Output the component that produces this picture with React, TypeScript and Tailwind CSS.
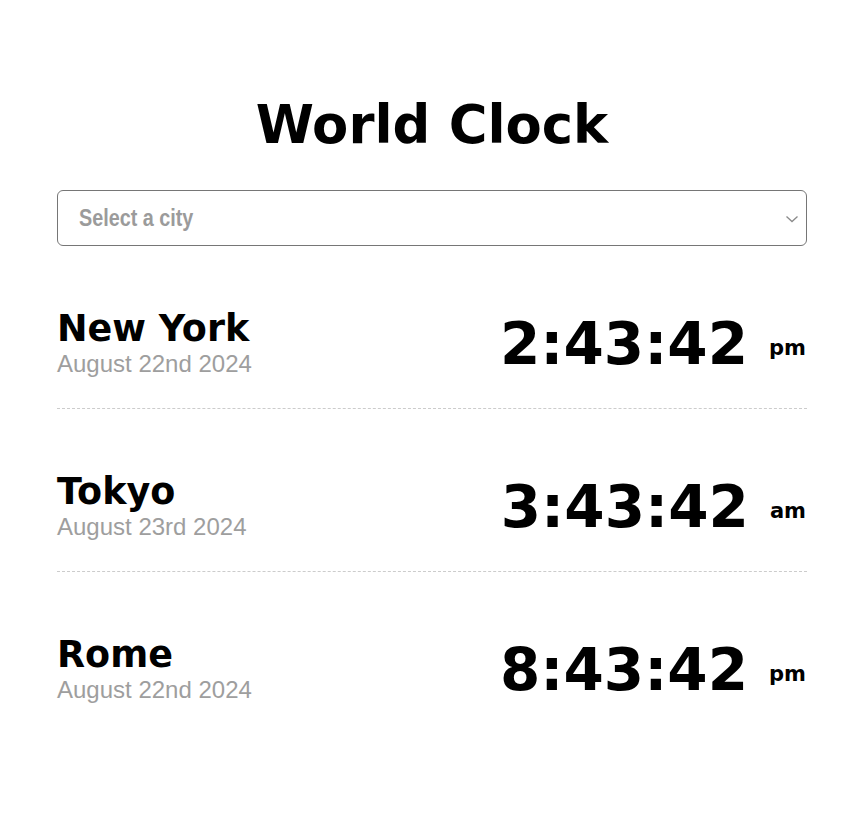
import { useState } from "react"

type City = {
  name: string
  date: string
  time: string
  period: string
}

const cities: City[] = [
  { name: "New York", date: "August 22nd 2024", time: "2:43:42", period: "pm" },
  { name: "Tokyo", date: "August 23rd 2024", time: "3:43:42", period: "am" },
  { name: "Rome", date: "August 22nd 2024", time: "8:43:42", period: "pm" },
]

const ClockRow = ({ city }: { city: City }) => {
  return (
    <div className="flex items-end justify-between border-b border-dashed border-[#cccccc] pt-[61px] pb-[30px] last:border-b-0">
      <div className="flex flex-col">
        <span className="font-['DejaVu_Sans',sans-serif] text-[36.5px] font-bold leading-[normal] text-black">
          {city.name}
        </span>
        <span className="font-['Liberation_Sans',Arial,sans-serif] text-[24px] leading-[normal] text-[#9e9e9e]">
          {city.date}
        </span>
      </div>
      <div className="flex items-end font-['DejaVu_Sans',sans-serif] font-bold text-black">
        <span className="text-[58px] leading-[normal]">{city.time}</span>
        <span className="mb-[18px] ml-[21px] mr-[1px] text-[21px] leading-[normal]">{city.period}</span>
      </div>
    </div>
  )
}

export default function App() {
  const [open, setOpen] = useState(false)

  return (
    <div className="min-h-screen bg-white">
      <div className="ml-[57px] w-[750px] pt-[94px]">
        <h1 className="text-center font-['DejaVu_Sans',sans-serif] text-[52.8px] font-bold leading-[normal] text-black">
          World Clock
        </h1>
        <div
          onClick={() => setOpen(!open)}
          className="mt-[35px] flex h-[56px] w-full cursor-pointer items-center justify-between rounded-[6px] border border-[#767676] bg-white pl-[21px] pr-[7px]"
        >
          <span className="inline-block origin-left scale-x-[0.86] font-['Liberation_Sans',Arial,sans-serif] text-[23px] font-bold text-[#9b9b9b]">
            Select a city
          </span>
          <svg width="14" height="8" viewBox="0 0 14 8" fill="none" className="mt-[2px]">
            <path d="M1.5 1.5l5.5 5 5.5-5" stroke="#8a8a8a" strokeWidth="1.3" />
          </svg>
        </div>
        <div className="flex flex-col">
          {cities.map((c) => (
            <ClockRow key={c.name} city={c} />
          ))}
        </div>
      </div>
    </div>
  )
}
